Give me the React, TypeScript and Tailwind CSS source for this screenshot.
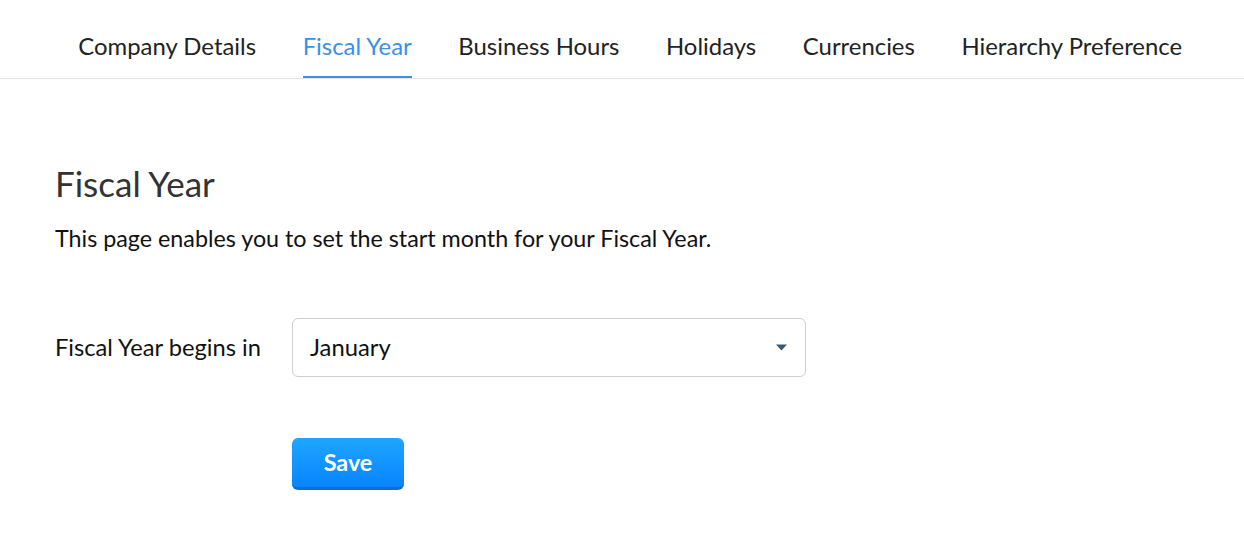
import React from "react";

export default function App() {
  const tabs = ["Company Details", "Fiscal Year", "Business Hours", "Holidays", "Currencies", "Hierarchy Preference"];
  return (
    <div className="w-[1244px] h-[556px] bg-white" style={{ fontFamily: "Lato, 'Noto Sans', sans-serif" }}>
      <div className="flex h-[79px] border-b border-[#e5e5e5] pl-[55px]">
        {tabs.map((t, i) => (
          <div key={t} className="px-[23.3px] flex items-stretch">
            <div
              className={
                "flex items-center text-[23.9px] pt-[16px] border-b-2 " +
                (i === 1 ? "text-[#3a8fe6] border-[#3a8fe6]" : "text-[#222] border-transparent")
              }
            >
              {t}
            </div>
          </div>
        ))}
      </div>
      <div className="pl-[55px] pt-[84px]">
        <h1 className="text-[35px] text-[#333] leading-[40px]">Fiscal Year</h1>
        <p className="mt-[21px] text-[23.3px] text-[#111] leading-[28px]">
          This page enables you to set the start month for your Fiscal Year.
        </p>
        <div className="mt-[66px] flex items-center">
          <div className="w-[237px] text-[23.7px] text-[#111]">Fiscal Year begins in</div>
          <div className="w-[514px] h-[59px] border border-[#cfcfcf] rounded-[6px] flex items-center justify-between pl-[17px] pr-[18px]">
            <span className="text-[23.8px] text-[#111]">January</span>
            <svg width="11" height="7" viewBox="0 0 11 7">
              <path d="M0 0.5 L11 0.5 L5.5 6.5 Z" fill="#3d5a73" />
            </svg>
          </div>
        </div>
        <div className="mt-[61px] pl-[237px]">
          <button className="w-[112px] h-[52px] rounded-[6px] text-white font-bold text-[23.4px] bg-gradient-to-b from-[#1ea6ff] to-[#0a84ff] border-b-[3px] border-[#0a6fd6]">
            Save
          </button>
        </div>
      </div>
    </div>
  );
}
